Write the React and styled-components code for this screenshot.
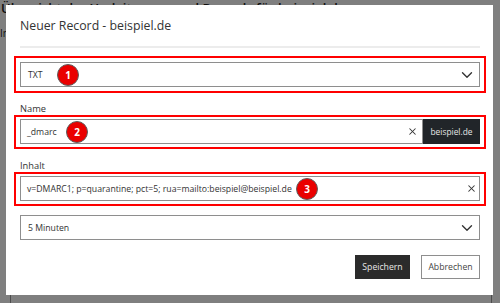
import React from 'react';
import styled, { createGlobalStyle } from 'styled-components';
import { ChevronDown, X } from 'lucide-react';

const Global = createGlobalStyle`
  html, body { margin: 0; padding: 0; }
  body {
    width: 500px; height: 303px; overflow: hidden; background: #fff;
    font-family: "Open Sans", "Noto Sans", sans-serif;
  }
  * { box-sizing: border-box; }
`;

/* ---------- page behind the dialog ---------- */
const Page = styled.div`
  position: relative;
  width: 500px;
  height: 303px;
  overflow: hidden;
  color: #1d1d1d;
`;
const PageHeading = styled.h1`
  margin: 0;
  padding-left: 1px;
  font-size: 13px;
  line-height: 16px;
  font-weight: 600;
  white-space: nowrap;
`;
const PageSub = styled.p`
  margin: 10px 0 0;
  font-size: 10px;
  line-height: 14px;
  white-space: nowrap;
`;
const RecordTable = styled.div`
  margin: 8px 8px 0 10px;
  border-left: 1px solid #9a9a9a;
  border-right: 1px solid #9a9a9a;
`;
const TableHead = styled.div`
  height: 24px;
  background: #dcdcdc;
`;
const TableRow = styled.div`
  display: grid;
  grid-template-columns: 193px 61px 1fr;
  height: 27px;
  align-items: end;
  padding-left: 3px;
  border-top: 1px solid #d0d0d0;
  font-size: 11.5px;
  line-height: 17px;
`;

/* ---------- dialog ---------- */
const Backdrop = styled.div`
  position: fixed;
  inset: 0;
  background: rgba(0, 0, 0, 0.5);
`;
const Modal = styled.div`
  position: absolute;
  top: 5px;
  left: 6px;
  width: 487px;
  background: #fff;
  padding: 0 13px 16px 14px;
`;
const ModalHeader = styled.div`
  padding: 12px 0 11px;
  border-bottom: 2px solid #ececec;
  margin-bottom: 14px;
`;
const Title = styled.h5`
  margin: 0;
  font-size: 12.3px;
  line-height: 18px;
  font-weight: 400;
  color: #333;
  white-space: nowrap;
`;
const Form = styled.div`
  display: flex;
  flex-direction: column;
  gap: 14px;
`;
const Field = styled.div`
  display: flex;
  flex-direction: column;
`;
const Label = styled.label`
  display: block;
  font-size: 9.3px;
  line-height: 16px;
  margin-bottom: 2px;
  color: #333;
`;
const Annotated = styled.div`
  position: relative;
  &::after {
    content: '';
    position: absolute;
    inset: -${(p) => p.$v}px -6px -${(p) => p.$vb ?? p.$v}px -6px;
    border: 2px solid #ff0000;
    pointer-events: none;
  }
`;
const SelectBox = styled.div`
  position: relative;
  display: flex;
  align-items: center;
  justify-content: space-between;
  height: 25px;
  border: 1px solid #8e8e8e;
  background: #fff;
  padding: 0 3px 0 7px;
  font-size: 8.7px;
  color: #333;
`;
const InputShell = styled.div`
  display: flex;
  height: 25px;
`;
const InputBox = styled.div`
  position: relative;
  flex: 1;
  display: flex;
  align-items: center;
  border: 1px solid #8e8e8e;
  padding: 0 ${(p) => p.$padRight}px 0 6px;
  background: #fff;
`;
const InputText = styled.span`
  flex: 1;
  font-size: 8.7px;
  color: #333;
  white-space: nowrap;
`;
const Addon = styled.div`
  width: 57px;
  background: #212529;
  color: #e6e6e6;
  display: flex;
  align-items: center;
  justify-content: center;
  font-size: 8.4px;
`;
const Badge = styled.span`
  position: absolute;
  top: 50%;
  left: ${(p) => p.$left}px;
  width: 22px;
  height: 22px;
  margin-top: -11px;
  border-radius: 50%;
  background: #ea0000;
  border: 1.5px solid #5e5e5e;
  color: #fff;
  font-weight: 700;
  font-size: 10px;
  display: flex;
  align-items: center;
  justify-content: center;
`;
const Footer = styled.div`
  display: flex;
  justify-content: flex-end;
  gap: 11px;
  margin-top: 1px;
`;
const Button = styled.button`
  height: 24px;
  width: ${(p) => p.$w}px;
  padding: 0;
  font-family: "Open Sans", sans-serif;
  font-size: 8.7px;
  border: 1px solid ${(p) => (p.$primary ? '#2b2b2b' : '#8e8e8e')};
  background: ${(p) => (p.$primary ? '#2b2b2b' : '#fff')};
  color: ${(p) => (p.$primary ? '#e8e8e8' : '#444')};
`;

/* rows hidden behind the dialog carry no text; only the last one shows */
const rows = [
  null, null, null, null, null, null, null, null,
  ['* beispiel.de', 'CNAME', 'beispiel.de'],
];

export default function App() {
  return (
    <>
      <Global />
      <Page>
        <PageHeading>Übersicht der Umleitungen und Records für beispiel.de</PageHeading>
        <PageSub>In</PageSub>
        <RecordTable>
          <TableHead />
          {rows.map((r, i) => (
            <TableRow key={i}>
              {r && (
                <>
                  <span>{r[0]}</span>
                  <span>{r[1]}</span>
                  <span>{r[2]}</span>
                </>
              )}
            </TableRow>
          ))}
        </RecordTable>

        <Backdrop />
        <Modal>
          <ModalHeader>
            <Title>Neuer Record - beispiel.de</Title>
          </ModalHeader>
          <Form>
            <Annotated $v={6}>
              <SelectBox>
                <span>TXT</span>
                <ChevronDown size={18} strokeWidth={1.8} color="#333" />
                <Badge $left={36}>1</Badge>
              </SelectBox>
            </Annotated>

            <Field>
              <Label>Name</Label>
              <Annotated $v={4} $vb={5}>
                <InputShell>
                  <InputBox $padRight={4}>
                    <InputText>_dmarc</InputText>
                    <X size={11} strokeWidth={2.2} color="#333" />
                    <Badge $left={45}>2</Badge>
                  </InputBox>
                  <Addon>beispiel.de</Addon>
                </InputShell>
              </Annotated>
            </Field>

            <Field>
              <Label>Inhalt</Label>
              <Annotated $v={4} $vb={5}>
                <InputShell>
                  <InputBox $padRight={2}>
                    <InputText>v=DMARC1; p=quarantine; pct=5; rua=mailto:beispiel@beispiel.de</InputText>
                    <X size={11} strokeWidth={2.2} color="#333" />
                    <Badge $left={275}>3</Badge>
                  </InputBox>
                </InputShell>
              </Annotated>
            </Field>

            <SelectBox>
              <span>5 Minuten</span>
              <ChevronDown size={18} strokeWidth={1.8} color="#333" />
            </SelectBox>

            <Footer>
              <Button $primary $w={55}>Speichern</Button>
              <Button $w={59}>Abbrechen</Button>
            </Footer>
          </Form>
        </Modal>
      </Page>
    </>
  );
}
